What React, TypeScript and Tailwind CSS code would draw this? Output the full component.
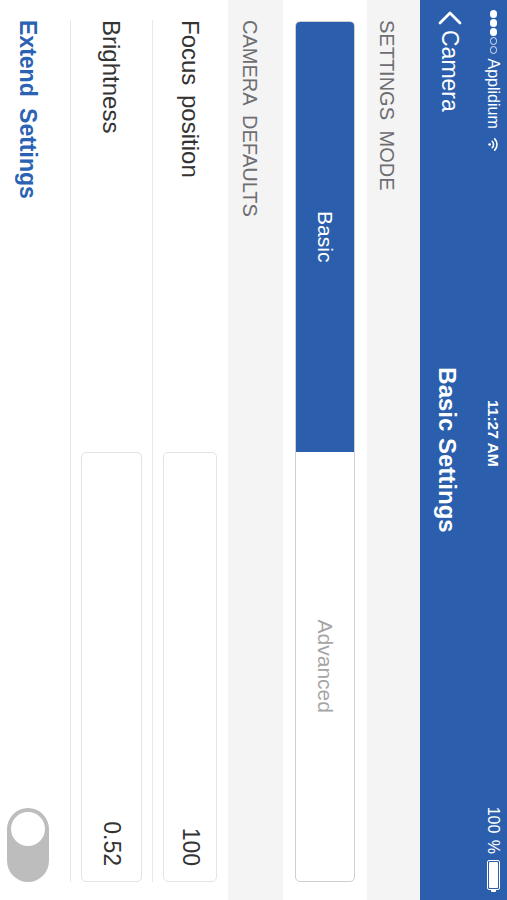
import React from "react";

const BLUE = "bg-[#2b5fae]";

function StatusBar() {
    return (
        <div className="h-[27px] flex items-center pl-[10px] pr-[8px]">
            <div className="w-[390px] flex items-center">
                <div className="flex items-center gap-[1.5px]">
                    {[0, 1, 2].map(i => (
                        <span key={i} className="w-[7.5px] h-[7.5px] rounded-full bg-white" />
                    ))}
                    {[3, 4].map(i => (
                        <span key={i} className="w-[7.5px] h-[7.5px] rounded-full border border-white/80" />
                    ))}
                </div>
                <span className="ml-[5px] text-[16px] leading-none">Applidium</span>
                <svg className="ml-[9px]" width="13" height="11" viewBox="0 0 13 11" fill="none">
                    <path d="M0.9 4.3 A8 8 0 0 1 12.1 4.3" stroke="white" strokeWidth="1.6" strokeLinecap="round" />
                    <path d="M3.3 6.8 A4.5 4.5 0 0 1 9.7 6.8" stroke="white" strokeWidth="1.6" strokeLinecap="round" />
                    <circle cx="6.5" cy="9.4" r="1.3" fill="white" />
                </svg>
            </div>
            <span className="text-[15.5px] leading-none font-bold">11:27 AM</span>
            <div className="ml-auto flex items-center gap-[6px]">
                <span className="text-[16px] leading-none [word-spacing:2px]">100 %</span>
                <div className="flex items-center">
                    <div className="w-[30px] h-[13px] rounded-[2px] border border-white p-[1px]">
                        <div className="w-full h-full bg-white rounded-[1px]" />
                    </div>
                    <div className="w-[2px] h-[5px] bg-white rounded-r-[1px]" />
                </div>
            </div>
        </div>
    );
}

function NavBar() {
    return (
        <div className="h-[60px] grid grid-cols-[1fr_auto_1fr] items-center">
            <div className="flex items-center gap-[5px] pl-[10px]">
                <svg width="15" height="24" viewBox="0 0 15 24" fill="none">
                    <path d="M13 2 L3 12 L13 22" stroke="white" strokeWidth="2.8" strokeLinecap="round" strokeLinejoin="round" />
                </svg>
                <span className="text-[23px] leading-none">Camera</span>
            </div>
            <span className="text-[24px] leading-none font-bold pt-[5px]">Basic Settings</span>
            <div />
        </div>
    );
}

function Row({ label, value, h, inputH }: { label: string; value: string; h: string; inputH: string }) {
    return (
        <div className={`${h} flex items-center pl-[20px] pr-[18px]`}>
            <span className="flex-1 text-[24px] leading-[28px] text-[#333] [word-spacing:3px]">{label}</span>
            <div className={`${inputH} w-[430px] border border-[#e3e3e3] rounded-[5px] flex items-center justify-end pr-[15px] text-[23px] text-[#333]`}>
                {value}
            </div>
        </div>
    );
}

export default function App() {
    return (
        <div className="relative w-[507px] h-[900px] overflow-hidden bg-white">
            <div className="absolute left-0 top-0 w-[900px] h-[507px] origin-top-left translate-x-[507px] rotate-90 flex flex-col overflow-hidden bg-[#f4f4f4] font-['Liberation_Sans',Arial,sans-serif]">
                <div className={`${BLUE} text-white shrink-0`}>
                    <StatusBar />
                    <NavBar />
                </div>

                <div className="h-[53px] shrink-0 flex items-end pb-[8px] pl-[20px] text-[20px] leading-[24px] text-[#6d6d72] [word-spacing:5px]">
                    SETTINGS MODE
                </div>

                <div className="bg-white py-[12px] pl-[21px] pr-[18px] shrink-0">
                    <div className="h-[60px] flex rounded-[5px] overflow-hidden border border-[#cfcfcf] text-[21px]">
                        <div className={`flex-1 ${BLUE} text-white flex items-center justify-center`}>Basic</div>
                        <div className="flex-1 text-[#a5a5a5] flex items-center justify-center">Advanced</div>
                    </div>
                </div>

                <div className="h-[55px] shrink-0 flex items-end pb-[10px] pl-[20px] text-[20px] leading-[24px] text-[#6d6d72] [word-spacing:5px]">
                    CAMERA DEFAULTS
                </div>

                <div className="bg-white flex flex-col shrink-0">
                    <Row label="Focus position" value="100" h="h-[75px]" inputH="h-[54px]" />
                    <div className="ml-[20px] mr-[18px] h-px bg-[#e8e8e8]" />
                    <Row label="Brightness" value="0.52" h="h-[81px]" inputH="h-[61px]" />
                    <div className="ml-[20px] mr-[18px] h-px bg-[#e8e8e8]" />
                    <div className="h-[84px] flex items-center pl-[20px] pr-[18px]">
                        <span className="flex-1 text-[23px] leading-[28px] font-bold text-[#2b62b3] [word-spacing:5px]">Extend Settings</span>
                        <div className="w-[74px] h-[42px] rounded-full bg-[#bdbdbd] p-[4px] flex items-center">
                            <div className="w-[34px] h-[34px] rounded-full bg-white" />
                        </div>
                    </div>
                </div>
            </div>
        </div>
    );
}
